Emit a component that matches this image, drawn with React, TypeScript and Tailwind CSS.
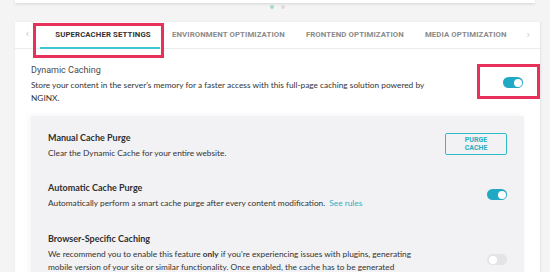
import React from 'react';

const Toggle = ({ on }: { on: boolean }) => (
  <div
    className={`w-[20px] h-[11px] rounded-full relative ${on ? 'bg-[#1fa9c4]' : 'bg-[#e4e4e6]'}`}
  >
    <div
      className={`absolute top-[1.5px] w-[8px] h-[8px] rounded-full bg-white ${on ? 'right-[1.5px]' : 'left-[1.5px]'}`}
    />
  </div>
);

const tabs = ['ENVIRONMENT OPTIMIZATION', 'FRONTEND OPTIMIZATION', 'MEDIA OPTIMIZATION'];

export default function App() {
  return (
    <div className="w-[550px] h-[272px] overflow-hidden bg-[#f4f4f5] relative font-['Lato',sans-serif] text-[#333]">
      {/* bottom of the card above */}
      <div className="mx-[15px] h-[3px] bg-white shadow-[0_1px_3px_rgba(0,0,0,0.12)]" />

      {/* slider dots */}
      <div className="h-[19px] flex justify-center items-start pt-[2px] gap-[7px] pl-[4px]">
        <div className="w-[4px] h-[4px] rounded-full bg-[#9fd8d2]" />
        <div className="w-[4px] h-[4px] rounded-full bg-[#dcdcdc]" />
      </div>

      <div className="ml-[15px] w-[526px] h-[250px] bg-white border-r border-[#e6e6e6] shadow-[0_0_2px_rgba(0,0,0,0.06)]">
        {/* tabs */}
        <div className="h-[27px] flex items-stretch border-b border-[#ececec] font-['Roboto',sans-serif] text-[7.8px] font-bold tracking-[0.1px]">
          <div className="w-[25px] flex items-center justify-center text-[#c8c8c8] text-[11px] font-normal pb-[1px]">‹</div>
          <div className="w-[120px] flex items-center justify-center text-[#333] border-b-2 border-[#3fc6d2] -mb-[1px] pl-[6px]">
            SUPERCACHER SETTINGS
          </div>
          <div className="flex items-center gap-[21px] ml-[12px] text-[#8a8a8a]">
            {tabs.map((t) => (
              <span key={t}>{t}</span>
            ))}
          </div>
          <div className="flex-1 flex items-center justify-end pr-[10px] text-[#d0d0d0] text-[11px] font-normal">›</div>
        </div>

        {/* dynamic caching */}
        <div className="flex items-start pl-[16px] pr-[17px] pt-[14px]">
          <div className="flex-1">
            <div className="font-['Roboto',sans-serif] text-[9px] text-[#4a4a4a] leading-[14px]">Dynamic Caching</div>
            <p className="mt-[2px] text-[8.3px] leading-[13px] text-[#333]">
              <span className="block whitespace-nowrap">Store your content in the server's memory for a faster access with this full-page caching solution powered by</span>
              <span className="block">NGINX.</span>
            </p>
          </div>
          <div className="pt-[14px]">
            <Toggle on />
          </div>
        </div>

        {/* inner panel */}
        <div className="mx-[16px] mt-[11px] w-[493px] h-[160px] bg-[#f2f2f4] shadow-[-2px_-1px_6px_rgba(0,0,0,0.04)] px-[17px] pt-[15px]">
          <div className="flex items-start">
            <div className="flex-1">
              <div className="text-[9px] font-bold leading-[14px] text-[#2f2f2f]">Manual Cache Purge</div>
              <p className="mt-[2px] text-[8.3px] leading-[13px]">Clear the Dynamic Cache for your entire website.</p>
            </div>
            <button className="mt-[2px] w-[62px] h-[22px] border-[1.5px] border-[#2fbac9] rounded-[2px] text-[#2aaec2] font-['Roboto',sans-serif] text-[7px] font-bold leading-[8px] flex flex-col items-center justify-center">
              <span>PURGE</span>
              <span>CACHE</span>
            </button>
          </div>

          <div className="flex items-start mt-[21px]">
            <div className="flex-1">
              <div className="text-[9px] font-bold leading-[14px] text-[#2f2f2f]">Automatic Cache Purge</div>
              <p className="mt-[2px] text-[8.3px] leading-[13px]">
                Automatically perform a smart cache purge after every content modification.{' '}
                <span className="text-[#2ab1c4] ml-[2px]">See rules</span>
              </p>
            </div>
            <div className="pt-[8px]">
              <Toggle on />
            </div>
          </div>

          <div className="flex items-start mt-[22px]">
            <div className="flex-1">
              <div className="text-[9px] font-bold leading-[14px] text-[#2f2f2f]">Browser-Specific Caching</div>
              <p className="mt-[2px] text-[8.3px] leading-[13px]">
                <span className="block whitespace-nowrap">
                  We recommend you to enable this feature <b>only</b> if you're experiencing issues with plugins, generating
                </span>
                <span className="block whitespace-nowrap">
                  mobile version of your site or similar functionality. Once enabled, the cache has to be generated
                </span>
              </p>
            </div>
            <div className="pt-[22px]">
              <Toggle on={false} />
            </div>
          </div>
        </div>
      </div>

      {/* annotation boxes */}
      <div className="absolute left-[33px] top-[23px] w-[131px] h-[35px] border-[3px] border-[#e7305a]" />
      <div className="absolute left-[477px] top-[64px] w-[63px] h-[35px] border-[3px] border-[#e7305a]" />
    </div>
  );
}
